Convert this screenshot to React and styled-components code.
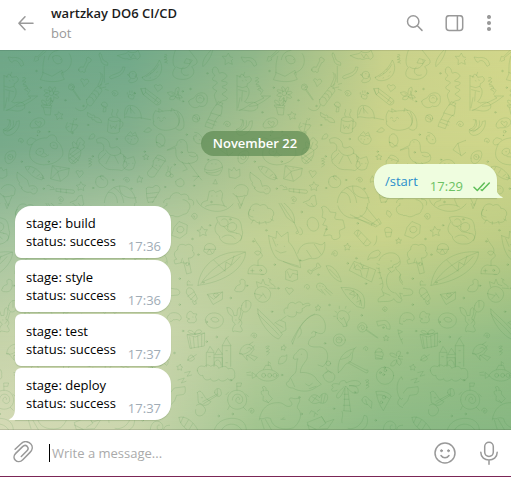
import React from "react";
import styled, { createGlobalStyle } from "styled-components";

const GlobalStyle = createGlobalStyle`
  * { box-sizing: border-box; }
  body { margin: 0; overflow: hidden; font-family: "Open Sans", "Noto Sans", sans-serif; font-size: 13px; }
`;

const Window = styled.div`
  display: flex;
  flex-direction: column;
  width: 511px;
  height: 477px;
  background: #fff;
  border-bottom: 1px solid #7b2556;
`;

const Header = styled.header`
  display: flex;
  align-items: center;
  height: 50px;
  flex: none;
  padding: 0 19px 0 17px;
`;

const Identity = styled.div`
  flex: 1;
  padding: 0 0 5px 16px;
`;

const Title = styled.div`
  font-weight: 600;
  line-height: 20px;
  color: #1c1c1c;
`;

const Subtitle = styled.div`
  line-height: 20px;
  color: #999;
`;

const Icon = styled.svg`
  display: block;
  flex: none;
  width: ${(p) => p.$w || 20}px;
  height: ${(p) => p.$h || 20}px;
  margin-left: ${(p) => p.$left || 0}px;
  fill: none;
  stroke: ${(p) => p.$color || "#999"};
  stroke-width: 1.5;
  stroke-linecap: round;
  stroke-linejoin: round;
`;

const Chat = styled.main`
  position: relative;
  display: flex;
  flex-direction: column;
  height: 380px;
  flex: none;
  padding: 81px 14px 10px 15px;
  overflow: hidden;
`;

const WallpaperBand = styled.div`
  position: absolute;
  inset: 0;
  background: linear-gradient(90deg, ${(p) => p.$colors.join(", ")});
  ${(p) =>
    p.$step > 0 &&
    `mask-image: linear-gradient(180deg, transparent ${(p.$step - 1) * 25}%, #000 ${p.$step * 25}%);`}
`;

const WallpaperEdge = styled.div`
  position: absolute;
  inset: 0;
  box-shadow: inset 0 1px 0 #00000018, inset 0 -1px 0 #00000020;
`;

const Doodles = styled.svg`
  position: absolute;
  inset: 0;
  width: 511px;
  height: 380px;
  fill: none;
  stroke: #3f8545;
  stroke-opacity: 0.17;
  stroke-width: 2.7;
  stroke-linecap: round;
  stroke-linejoin: round;
`;

const DateBadge = styled.div`
  position: relative;
  align-self: center;
  width: 109px;
  height: 25px;
  margin: 0 2px 8px 0;
  border-radius: 13px;
  background: #5f8c54b8;
  color: #fff;
  font-weight: 600;
  line-height: 25px;
  text-align: center;
`;

const Bubble = styled.div`
  position: relative;
  display: flex;
  flex: none;
  align-self: ${(p) => (p.$out ? "flex-end" : "flex-start")};
  width: ${(p) => (p.$out ? 123 : 156)}px;
  height: ${(p) => (p.$out ? 34 : 52)}px;
  margin-bottom: ${(p) => (p.$out ? 8 : 2)}px;
  padding: ${(p) => (p.$out ? "8px 6px 0 11px" : "8px 10px 0 11px")};
  border-radius: ${(p) => p.$corners};
  background: ${(p) => (p.$out ? "#effddf" : "#fff")};
  box-shadow: 0 1px 1px #7b966666;
`;

const Body = styled.div`
  flex: 1;
  white-space: pre-line;
  line-height: 18px;
  color: ${(p) => (p.$link ? "#2a8dcc" : "#000")};
`;

const Time = styled.time`
  align-self: flex-end;
  line-height: 18px;
  padding-bottom: 3px;
  color: ${(p) => (p.$out ? "#6cc264" : "#a0acb6")};
`;

const Tail = styled.svg`
  position: absolute;
  bottom: 0;
  ${(p) => (p.$out ? "right: -6px; transform: scaleX(-1);" : "left: -7px;")}
  width: 8px;
  height: 12px;
  fill: ${(p) => (p.$out ? "#effddf" : "#fff")};
`;

const Ticks = styled(Icon)`
  align-self: flex-end;
  margin-bottom: 5px;
`;

const Composer = styled.footer`
  display: flex;
  align-items: center;
  height: 46px;
  flex: none;
  padding: 0 12px 0 12px;
`;

const Field = styled.div`
  flex: 1;
  display: flex;
  align-items: center;
  height: 18px;
  margin-left: 14px;
  padding-left: 2px;
  border-left: 1px solid #000;
  color: #aaa;
`;

const WALLPAPER = [
  ["#6fa788", "#70a98a", "#8fb78a", "#c8d18c", "#d2d78b"],
  ["#77aa8a", "#84b08d", "#acc490", "#cbd38a", "#cfd68a"],
  ["#a5c49f", "#b9cea6", "#c2d196", "#c9d38b", "#bccc85"],
  ["#c5d3a9", "#cfd8b0", "#b8cd9b", "#a3c48a", "#93bd85"],
  ["#d4dab5", "#cbd6ae", "#a1c48f", "#8cba86", "#87b782"],
];

const Tile = () => (
  <g id="tile">
    <g transform="translate(0 -5) scale(.33333)">
      {/* top row: arrow, dog, bones, worm, watermelon, bear */}
      <path d="M30 48l-6-12 14 2c15-2 30 2 33 22l-8 4-7-12c-8-8-16-6-19-1z" />
      <path d="M102 48l4-14 6 2 20-20M106 49l10-4-2-6 24-20M134 34c-9 34-3 42-6 54l-7 16c26 8 52 8 72-1l-10-19c31-6 38-40 25-58M128 82l28 12 30-18 4 14M158 36c10-12 34 0 27 16-9 9-27 4-27-16M181 44l2-1M145 44c3-19 15-26 29-28" />
      <path d="M236 75c0-10 9-10 14-8l10-20c-4-11 8-13 10-6 8 1 2 12-4 12l-10 20c2 8-5 14-8 6-5 4-12 2-12-4z" />
      <path d="M299 24c9-2 4 20 15 24 9 4 10 4 9 13-17-2-19-9-21-19-2-6-8-13-3-18M375 68c-6 26-24 26-42 34l-5-6c11-11 38-8 40-29zM313 64v48M300 82c10 14-2 26-6 39M306 86c8 17-3 25-4 37" />
      <path d="M427 97c20-9 43-30 51-52 18 28 0 64-37 62-7 0-14-5-14-10zM438 95c17-8 30-20 38-36M451 86l2-2M461 75l2-3M466 94l2-2M450 99l2-1M470 83l2-3" />
      <path d="M526 16c-6 16-12 42 0 51-16 22-6 35 18 36 29 2 48-19 31-38 9-6 20-7 15-21l-22-28M530 66c20 15 47-4 40-20M560 41l17 5-7 10-17-2zM550 66c-14 11-3 31 15 24" />
      <path d="M608 64c-1-18 7-30 24-48M610 64c11-10 23-26 28-48M668 34l11 0 6-10 6 12 12 2-9 9 3 11-12-5-10 6 1-13z" />
      <path d="M353 32c15-7 26-2 31-13 8 6 24 5 30-3 5 12 12 19-2 27-10-9-20 5-30-2-7 2-18-2-29-9zM385 27l8 12 6-12 8 10" />
      <path d="M494 29q7-3 7 3l-9 4q8-2 9 4l-8 4q8-3 9 4l-8 4q7-3 8 3" />
      {/* giraffe on a canvas */}
      <path d="M12 92V196M12 92l12 4M20 97c2-15 12-10 15 0l15-2c10 8 3 17-7 21l-1 10c13 9 4 34-7 44l8 4c30-9 38 10 26 20-20 11-37-4-49 2M14 124l15 4 12-4M17 134l24 6M21 158l-6 30M28 140l-2 28M35 82l-4 10M28 107l2 1M38 105l2 1M64 173l29-14-8-6 28 0-20 15-24 14-20 2M18 196c20-5 30-19 42-22" />
      <path d="M68 98q8-4 9 3-9 4-10 8 8-4 11 2-8 2-9 8 9-2 11 4M72 124q10-2 12 4-10 2-10 6 8 0 9 6M81 130q8 2 9 6l-7 12" />
      {/* potted flower */}
      <circle cx="154" cy="145" r="7" />
      <path d="M150 139c-11-18 4-19 7-2 4-17 18-12 4 5 17-9 24 5 3 7 20 5 12 18-3 6 4 18-11 20-9 2-9 18-22 11-6-4-18 6-18-8-2-9-20-4-13-17 6-5M154 160l-4 20M125 180l31 2-4 7-25-3zM130 188l5 21 16 1 2-20M141 180c-13 0-19-10-15-15 9 1 14 7 15 15M146 176q5-13 13-8-2 8-9 12" />
      <circle cx="214" cy="126" r="9" /><path d="M209 123q5-4 9 0t-5 7M217 134l22 31M220 133l21 31" />
      <path d="M260 164l30-38c5-7 14 3 16 12l-32 44c-8 3-18-8-14-18zM268 156q12 0 12 12M276 146q12 0 12 12M284 137q12 0 12 12M262 180c-5 20-24 22-36 9M295 126l10-10M299 130l18-4M316 118l10-3M316 133l9 3" />
      <path d="M245 110c-9-6 2-14 8-4 8-9 18 2 10 8l-10 10zM465 128c-7-6 3-14 9-5 8-9 18 3 10 9l-10 7zM230 384c-6-7 4-11 9-4 9-7 14 3 8 9l-8 8z" />
      <path d="M423 131l13-1 46 35c2 11-5 17-14 14l-38-30zM423 131l7 18 7-7-1-12M437 142l37 29M472 157l-9 14M480 169l-9 8" />
      <circle cx="398" cy="90" r="11" /><path d="M391 102c-14 11 5 14 14 8 12-4 7-19 0-16M388 87l-6 2 7 5M398 86h1M335 142c7-13 25-1 17 8-10 8-20-4-11-7 6 0 6 5 3 6" />
      <path d="M385 155c-2-9 6-9 9-4 8-4 10 2 7 8 2 5-16 4-16-4M382 143v4M389 138v4M396 138v4M403 142v4" />
      <path d="M503 143c14-7 19 1 22 6-1-16 5-23 11-22 4 10-2 19-7 24 9-3 16 1 18 7-8 3-15 1-22-5 3 8-5 14-16 10 0-7 4-11 12-10-8 2-15-1-18-10M532 138l8 28M516 145l18 18" />
      <path d="M566 169c2-9 17-5 21-17 7-12 38-14 35 11 1 18-12 25-24 20-11 12-32 1-32-14" /><circle cx="600" cy="162" r="12" /><path d="M596 160q3-6 8-1" />
      <path d="M637 73c5-13 17-7 19 7 3 11 5-3 18 5 17 10-3 17-9 22-5 5 23-1 15 11-4 6-18 3-12 10 6 3 17 4 10 11l-11 7c-3 6 15 7 15 15-4 9-16 0-26 16M638 74c-5 14 8 12 6 19-7 6-11 13 2 15 12 5 2 10-6 16-7 8 8 11 11 14-16 15-3 20-2 34" />
      <path d="M651 177l16 7-3 24c-17 8-20 25-27 43l-22-7c4-19 15-26 19-43zM649 181l5-11 15 5-5 9M633 204l30 9M625 223l25 8M622 232l24 9" />
      {/* middle band */}
      <path d="M165 209l8-1 3-8 6 7 7 0-5 7 3 8-9-3-7 5-1-9zM263 203l14 8c6-3 9 3 6 6 12-2 22 7 22 16-11-1-18 0-22-9-8 2-9-2-6-6-13-1-17-6-14-15M304 178c3-12 19-7 18 3-1 8-13 11-18-3M311 190l-2 11 8-1 1-11M307 182l10 4" />
      <path d="M202 233l-5 13c8 23 25 18 37-5l-6-3M221 226l-8 34M210 236l19 4M222 221c3 6 11 4 8-1M200 247l7-3" />
      <path d="M325 222c-2-7 31-10 36 2l-3 37c-10 7-30 5-35-1zM326 224c8 8 27 8 34 0M358 229c16-5 14 19-1 23M331 240l3 11 6-8 6 8 4-12M338 214c-10-10 5-12-1-21M352 214c-8-11 7-12 1-21" />
      <path d="M374 218c-2-22 3-37 16-37 19 0 35 15 34 39M374 218c7-8 19 4 45 0l33 6M391 184l2 20M385 190l-7 18M390 189l14 16" />
      <path d="M461 230c-5-19 1-24 5-33l13 4c12-5 26-3 35-5 25-5 38 19 38 42 0 20-16 22-26 11-22 11-47 8-58-4-8-5-10-10-7-15M477 201l-1-10 13 8M513 200l2-10 9 7M472 219q5-5 8 1M489 219q5-5 8 1M479 227q5 6 10-1M524 202c15 15 18 34 4 46M532 201q13 21 3 40" />
      <circle cx="588" cy="220" r="11" /><path d="M580 216l13 8M583 211q12 4 11 17M671 238c2-15 21-10 20 1-2 9-16 7-14-1 2-4 8 0 6 2" />
      <path d="M22 224l8 1c-4 16-4 23-18 27-6 12 37 3 37-22l9-3c3 24-18 46-36 44-12-2-14-12-11-18M30 225q10 21-16 33M40 227q6 24-19 34" />
      <path d="M91 237c6-21 45-27 43-3-4 14-21 15-32 14-8 4-14-2-11-11M108 237c-9-9 3-12 6-4 8-8 15 0 4 12-3-1-7-4-10-8" /><circle cx="116" cy="260" r="4" /><circle cx="112" cy="271" r="1" />
      <path d="M97 297c6-9 23-20 44-18 11-17 31-9 29 8 13 8 24 37 16 47-18 28-66 33-86 15-19-14-10-38-3-52-18 11-22-13-4-19l14 5" /><path d="M109 326c-7-11 13-22 21-13 5 14-12 26-21 13M151 296c13-14 27 5 19 15-11 2-22-4-19-15M132 323l8 6M123 335q10 5 23-5M119 320h3M160 301h3" />
      <path d="M211 312c12-9 23-3 31 4 3 15-8 35-22 40-19 0-16-31-9-44M210 327l26 20M208 338l18 15M238 320l-30 20M229 313l-19 15M238 333l-22 20M221 309c-10-23 1-22 8-11 3-21 15-25 18-13 9 2 7 12 1 14 10 2 6 13-6 17M231 299l1 12M240 292l-6 17" />
      <path d="M290 283c17-14 39 2 39 18 0 10 11 9 21 4 10 4 15 12 10 20 14 2 22 18 11 25l8 0 3 12-16 15c-22-7-43 4-58-15-10-6-12-12-11-20-6-9 4-23 13-25 6-21-7-26-17-23zM317 315c13 23 37 19 46 8M317 325l-19 20M330 333l-12 23M344 333l11 22M373 346l-3-14 12 9 19-6 5 17-6 19c-12 8-29 4-31-9zM386 356h1M398 355h1" />
      <path d="M376 283c-3-12 10-14 19-9 9-8 23 3 19 13-5 16-24 13-32 4zM382 269l10-9 5 8 9-6 5 12M384 282h1M394 284h1M404 281h1M391 291h1" />
      <path d="M470 293c-6-19 5-29 14-26 11 6 15 23 6 34-9 10-21 6-20-8zM468 291l11 4 4 6 10 2M432 260c10-14 17-16 22-4q-8 10-22 4M267 282c3-18 17-19 18-9q-3 11-18 9" />
      <path d="M502 315l28-14c0-18 20-24 29-9 6 12 0 22 6 31 24-6 33 11 26 24-18 13-49 12-59-7-8-13-2-21-6-32l-17 6zM542 291h1M546 350l16 23-13 5M566 353l30 41M596 394l-17 0M596 394l-14 13M596 394l9 11M568 331q15 10 23 0" />
      <path d="M584 262c17-1 31 24 21 33-12 5-24-5-25-15M588 270h2M598 284h2M583 283c-6-10 1-14 6-9M675 295l23-9 15 24-27 22-25-17zM675 295l8 36" />
      <path d="M15 340c-2-17 15-25 29-22 10 12-3 34-17 38-9 0-12-6-12-16" /><circle cx="31" cy="336" r="8" /><path d="M28 333q5-1 4 4" />
      <path d="M265 341q9-4 10 2l-9 5q8-2 9 4l-9 5q8-3 9 3l-9 6M429 334l6-1 2-6 4 6 6 1-5 4 2 6-6-3-6 3 1-6zM56 290c-4-14 13-12 14-3 0 8-9 8-9 2 1-3 4-2 4 0" />
      <path d="M460 348l13-18c11 1 21 7 24 15l-34 50c-14 6-25-6-19-16 7-7 17-11 16-31M466 338l31 11M456 363l16 12M475 346h2M468 361h2M478 363h2" />
      <path d="M614 372c2-22 24-34 41-26 18 10 14 32 1 44-16 4-35-2-40-9zM614 372c8 8 33 5 54-6M619 382c15 4 30 1 43-7M635 356h1M647 357h1" />
      <path d="M76 366c12-9 41 6 54 29l-4 10-14-4c-17-7-32-23-36-35M89 366l-4 8M104 374l-6 10M119 388l-8 6M121 397l12 4M126 390l5 11M158 362l50 8-4 22-22 17-29-7zM158 363l16 16 33-8M154 400l20-20M181 407l-8-26M180 370h1" />
      <path d="M687 372l9 5 7-10 7 10 10-5 1 21-13 7-19-3zM-13 372l9 5 7-10 7 10 10-5 1 21-13 7-19-3z" />
      <path d="M287 411c0-14 7-18 19-17 20 4 22 25 9 32-16 6-29-3-28-15M300 394q2-6 11-1M301 394q0 9 9 11M370 404c3-13 21-6 18 3-3 7-14 4-12-3 4-5 7 1 5 3M414 400l4-8 3 7 8 0-5 6 1 7-6-3-7 3 0-7z" />
      <path d="M500 383c5-9 15-2 10 9-9 7-17-1-10-9M513 387c9-2 9 11 1 10-6-2-6-8-1-10M503 377q5-10 1-14M510 382q-1-12 5-17M527 409c3-7 8-4 14-9 8 2 14 12 10 20-9 10-26 5-24-11M641 414l5-11 6 14-13-1" />
      <path d="M52 382l30 23 6 19c10-5 23-1 24 11-1 12-15 16-20 6-14 4-24-5-29-12l4-1c-10-5-12-14-8-15-9-9-10-22-7-31M96 433h1M102 430h1M169 431l50 4c8 3 4 11-2 10l-48-6zM182 432v9M199 435v9M141 422c12-7 8 11 18 3l4 8-13 1M243 411l5 8 9 2-7 7 1 9-8-5-9 4 1-9-6-6 9-2z" />
      <path d="M4 431c10-19 38-15 42 3-3 9-1 17-7 19-5-6-9 4-15 1-10 4-20-2-24-9M10 452l14 30 12-28M703 431c10-19 38-15 42 3-3 9-1 17-7 19-5-6-9 4-15 1-10 4-20-2-24-9M709 452l14 30 12-28" />
      <path d="M313 480c-2-29 19-56 47-57 30-2 50 27 49 60M342 428c26 14 28 35 30 54M326 442c23-2 27 21 27 42M359 423c-4 30 28 40 49 35M439 430c7-10 19 5 25-8 11-4 21 9 13 19l-27 43c-11-20-10-29-11-54M440 446l34-4M442 459l27-3M446 472l15-2" />
      <path d="M491 480c-4-15 9-21 18-18 4-22 28-23 34-12 16-8 26 4 23 13 12-2 18 8 14 17M604 480c-1-7 8-12 18-13l6-28 12-3 7 6 15-6 6 10-3 19 8 18M635 453h1M650 453h1M175 460c5-12 19-1 14 8-8 6-15-3-9-6 4-1 5 3 2 4M214 480l-3-8 18-7 6-11 11-4 5 28" />
      {[[109,78],[122,128],[88,202],[196,166],[250,183],[264,240],[404,145],[548,139],[571,132],[549,169],[622,85],[147,260],[217,264],[350,282],[434,320],[560,269],[545,322],[65,350],[146,350],[278,334],[524,359],[624,344],[279,429],[339,405],[495,426],[582,422],[131,431],[394,431]].map(([x, y]) => <circle key={x + "-" + y} cx={x} cy={y} r="2.3" />)}
    </g>
    <g transform="translate(170 150) scale(.33333)">
      {/* upper band: sheep, parasol, tree, balloon */}
      <path d="M240 28c0-15 22-22 30-11 13-8 22 0 23 8 17-1 23 18 14 25 4 14-12 21-21 15-14 9-29 2-32-4-17 2-24-16-14-33M240 28c-10 13-4 21 9 23M250 31h1M250 60l-6 10M268 65v8M286 66l3 6M302 57l8 5" />
      <path d="M326 8l24 44 23 17c4-25-12-45-36-64zM331 7l41 60M373 69l13 29c-11 9-9-6-4-5M389 81c15 13 8 27 0 23" />
      <path d="M455 22c5-9 20 0 25 14l18 2c-1 11-7 14-1 20l22 2 6 24-16 7c-4 8 4 13 0 22-13 9-25 8-24-6-6-6-17 2-24 0 4-14 12-22 10-29l-13-3 10-18-12-5c3-15 4-16-1-30" />
      <path d="M504 18c8 23 27 39 51 36 25-1 39-20 39-54M554 54l60 20M570 46l50 30M589 22l41 50M541 44l64 32M604 74l13 7 17-11-7-13zM652 32l8 3 5 9-6 8-9-9z" />
      <path d="M684 40c-10-11-4-22 6-24-3-19 16-26 28-18 12-10 34-2 34 12 12 1 17 24-4 30-13-4-18 12-31 13-13-1-14-10-22-9zM784 18c23-27 72-28 84-6M800 20c8-9 50-11 59 1M406 8c-2-9 26-14 34 3-1 12-24 13-34-3M421 5l9 13M361 2c-2 10 15 12 20 0M80 0c7 29 77 54 109 12M106 20c7-9 53-9 64 1M201 0l9 26 12-26M-4 48c21-7 15 9 37-1 10-7 20-3 22-16 12-12 0-31-16-32" />
      <path d="M12 83l-7 23 25 9 20-15 2-25-24-10zM22 94c-8-14 14-20 19-9 4 11-14 19-19 9M711 83l-7 23 25 9 20-15 2-25-24-10zM721 94c-8-14 14-20 19-9 4 11-14 19-19 9" />
      <path d="M82 91l9-1 4-11 7 10 10 0-6 9 3 9-10-4-10 6 1-11zM781 91l9-1 4-11 7 10 10 0-6 9 3 9-10-4-10 6 1-11zM64 50c3-17 21-10 17 2-4 10-16 5-12-3 3-5 7 1 4 4" />
      <path d="M140 52c13-6 46-3 66 7 12 15 6 25 12 37 0 21-14 38-34 36-20 2-36-10-36-24-18-13-15-28-5-42zM155 60c9-10 22 2 19 12-6 13-29 7-27-5M173 80c0-12 18-17 25-7 8 15-10 26-20 19-6-2-5-8-5-12M161 79l15 16 23 4M199 100c17 0 20 14 12 23M156 112c13-11 30-9 40 5" />
      <path d="M412 75c-4-15 9-27 20-22 14 6 20 29 7 38-13 8-25-5-27-16M553 99c2-6 7-9 13-9l36 37c-3 9-10 12-16 10zM565 91l-4 16M572 99l-8 11M591 117l-10 14M620 108q2 20-8 28M644 89c0-10 16-9 22 1l-4 20-12 1zM647 97h17M523 137l6-1 4-7 2 8 7 2-5 5 1 6-7-3-6 4 1-8zM678 120l6-1 2-6 2 6 7 1-5 4 1 6-5-3-6 4 1-7z" />
      {/* fox, surf board, broccoli, gamepad */}
      <path d="M296 107l22 8 2-22 14 17 20-14 2 30c19 18 23 43 33 57l3 20c-23-3-48-19-67-24-15-10-27-41-29-72M308 115l10 24M322 134h1M343 139h1M317 151l15 8 16-4M383 160c8-31 28-31 48-31 17 0 22 14 33-3 5 30-14 53-38 50-12-3-28 11-36 6M410 151l14 21M433 133l20 30M340 185l45 13" />
      <path d="M84 256c7-67 70-107 142-100 4 24-31 86-142 100M92 252c23-40 69-72 134-96M103 243c39-15 78-39 107-73M132 181l33 33 3-28 15 9 9-27M784 256c7-67 70-107 142-100 4 24-31 86-142 100M792 252c23-40 69-72 134-96M803 243c39-15 78-39 107-73M832 181l33 33 3-28 15 9 9-27" />
      <path d="M19 177c-13-16-2-25 4-28-1-20 18-17 24-13 13-9 27 4 20 17 11 7 4 23-12 21l9 44-14 4-10-39M20 177l-8 4 3 11 20-4 15 2M37 175l-4 13" /><circle cx="52" cy="192" r="5" />
      <path d="M718 177c-13-16-2-25 4-28-1-20 18-17 24-13 13-9 27 4 20 17 11 7 4 23-12 21l9 44-14 4-10-39M719 177l-8 4 3 11 20-4 15 2M736 175l-4 13" />
      <path d="M103 147c-2-22 31-21 34-3 1 8-8 6-5 13-8 8-20 9-25 0-9-2-6-5-4-10M104 148l33 0M112 157l6-10 8 13" />
      <path d="M234 221c-2-18 14-30 25-25 5 1 18-2 22 3 13 8 13 28-8 25M235 221l45 2M264 197v-16l13-12c0-13-15-21-23-12 4 12 17 11 19-4 0-14-14-21-20-38M247 207v10M242 212h10" /><circle cx="272" cy="211" r="3" />
      <path d="M347 237v-24l10-7 10 4 15 2 1 26-15 6zM352 215l8 19 8-14 15 4M413 215c-2-8 9-6 10-2l17-13c-3-14 8-14 7-5 8 1 6 10-1 8l-20 11c1 10-8 11-9 3zM469 198c17-8 39 22 45 48-19-5-37-25-45-48M479 208l25 25M485 164c2-17 19-15 17-2-2 10-15 6-12-2 2-4 6-1 5 2" />
      <path d="M538 210l14-26 65 26-12 35zM552 190l4 18 15 2 5 18M571 188l9 18 16-1-7 27M550 205l12-11 14 14 4-12M593 179c2-16 12-25 32-29l6 7c-2 14-15 18-28 17zM440 263c-5-24 29-13 29 3M442 267l16 12M453 268l13 17M464 268l18 18M470 266q10 8 17 14M449 258h1M458 260h1M403 262c1-14 18-9 15 1-3 8-11 3-8-2M347 269c-4-6 6-10 10-2 8-7 17 3 10 8l-9 8z" />
      {/* dinosaur */}
      <path d="M627 182c10-29 56-32 62-5 5 16-2 23-13 25 2 12 14 11 16 23-8 12 13 23 12 36 11 8 20 6 24 12-7 12-26 12-39 6l7 21c-3 12-20 8-24-4-12 13-26 6-47 10-4-12 8-16 17-20l-7-18c13-19-10-42-8-65M662 183h3M668 201l-15 5 12 11 9-7M668 202c-3-13 14-5 20-17M662 215c-18 8-19 56 10 63M692 224c-10 10-1 26 10 32M676 278l16 18M641 278l19 8M621 191l7 3M619 204l8 2M624 218l8 0M628 235l7-1M630 253l7-3" />
      <path d="M197 264c1-12 17-7 14-14-7-18 18-14 14-1 3 17-5 29-22 26-8 1-13-6-6-11M113 283l45-7-1 22-27 15zM113 284l18 14 26-22M132 288c-5-9 4-9 6-5 8-7 10 4 1 9zM49 278c-1-18 13-18 21-8 3 8 10 17 12 27l-8 8-13-9zM53 289l19-13M62 299l14-15M67 304l5 10 7-3-2-9M52 255c-3-14 5-16 8-9M52 255h16M748 278c-1-18 13-18 21-8 3 8 10 17 12 27l-8 8-13-9zM752 289l19-13M761 299l14-15M812 283l45-7-1 22-27 15z" />
      <path d="M254 281c1-30 44-27 48 0-2 36-47 33-48 0M254 281l20 5M278 279l10 15M266 297l13-14M263 261l-4-16 15 6 5-14 6 16 12 4M300 239c-7 16 17 12 15 23M295 235l8 5M298 264l20 2" />
      <path d="M514 263c19-2 46 2 61 17 10 10 10 31 7 45l-21-5c-15-12-38-36-47-57zM525 269c23-2 47 11 50 48M539 281l12-9 2 13zM548 294l15-12-1 16M560 306l12-5-3 12" />
      {/* lower middle: boat, whale spout, rabbits */}
      <path d="M-8 270c7-10 16-3 24-3 12-1 19 12 8 18l-29 3M2 340c6-3 18-4 27 4 8 9 4 16-1 18-8-7-13-1-18-3-5 10-18 4-10-3l-10-5" />
      <path d="M50 352c-1-19 15-23 19-11l12 1-5 9c8 10-1 19-9 17-17 4-19-11-9-11zM68 351h1M747 352c-1-19 15-23 19-11l12 1-5 9c8 10-1 19-9 17-17 4-19-11-9-11zM106 360c3-29 47-27 54-3 4 33-51 39-54 3M123 357c5-11 23-3 24 5-8 8-23 4-24-5M806 360c3-29 47-27 54-3 4 33-51 39-54 3M823 357c5-11 23-3 24 5-8 8-23 4-24-5" />
      <path d="M171 323c12-3 19 10 21 24l9-1c0-20 5-26 10-22 4 15-1 23-5 31 13 10 11 19 4 23 12 14 7 20-5 17l-11-2-5 3c-5-13 6-21 7-24-15-10-6-20-10-24-12-5-14-16-15-25M197 360h1M207 359h1M215 317c6-20 20-18 27-10 4 10-3 25-14 29-14 0-15-9-13-19M228 302v20M219 337c-6 14-2 19-14 33M871 323c12-3 19 10 21 24l9-1c0-20 5-26 10-22 4 15-1 23-5 31 13 10 11 19 4 23 12 14 7 20-5 17l-11-2-5 3c-5-13 6-21 7-24-15-10-6-20-10-24-12-5-14-16-15-25M915 317c6-20 20-18 27-10 4 10-3 25-14 29-14 0-15-9-13-19" />
      <path d="M263 327c17 18 58 52 74 76l-11 14c-21-5-63-52-63-90M263 341c22 24 46 43 64 65M314 369l15-9 17 7 2 23-15 8M318 370l21 12M333 360l15-11M344 340c-7-13 4-19 9-15-1-22 20-20 23-13 12-13 22-3 22 3 15-9 25-5 21 2-19-1-13 8-23 9 5 14-11 16-17 9 4 20-19 18-26 12M963 327c17 18 58 52 74 76l-11 14c-21-5-63-52-63-90" />
      <path d="M368 432c10-32 32-80 66-88 19-4 35 20 32 41-2 20-15 18-30 11 2 10-1 17-11 15-17 20-12 31 16 30 24-4 40 18 28 46l-10 13-15-5M368 432l-3-8c20-41 42-74 69-82M391 383q10 18-7 30M425 400q2-12 15-2" /><circle cx="475" cy="490" r="7" />
      <circle cx="508" cy="420" r="18" /><circle cx="507" cy="420" r="9" /><path d="M503 418q3-5 8 1" />
      <path d="M502 355c-4-19 9-26 21-22 20 8 17 28 8 34l-1 12-11 1c2-11-13-11-17-25M510 354q6 9 11-2l10 25M491 349h5M495 334l5 3M508 319v7M528 319l-2 6M541 334l-5 4" />
      <circle cx="577" cy="382" r="14" /><path d="M567 383c4-13 18-8 16 1-3 10-12 3-8-3M588 391l34 23M590 389l34 24M621 364l16-2c13-5 26 10 23 26l-10-2c0-14-9-13-15-11l-10 3zM637 329c2-13 16-10 14 0-4 10-14 4-9-1 4-3 5 1 3 3M684 390c17 0 37 28 47 59l-9 8c-19-11-36-45-38-67M694 419l25-17M709 446l17-14M686 401l9-4M689 370c-2-20 6-34 30-34 11 5 17 15 11 27l-16-3c-4 15-23 15-25 10M701 340l11 22" />
      <path d="M437 321l5-1 2-6 4 6 5 2-5 4 1 5-6-2-5 3 1-6zM334 441l5-1 3-6 2 6 5 2-5 4 0 5-5-3-5 2 1-6zM641 412l5-1 2-6 3 6 6 1-4 4 1 6-6-3-5 3 0-6zM21 499l6-1 4-6 2 7 5 2-4 4 1 6-6-3-6 2 1-6zM721 499l6-1 4-6 2 7 5 2-4 4 1 6-6-3-6 2 1-6z" />
      {[0, 699].map((x) => <path key={x} transform={`translate(${x} 0)`} d="M52 404l52-5-1 39-42 7zM52 404l24 7 28-12M59 411l5 34M70 411l3 32M83 408l2 34M95 404l0 35M75 403c-15-1-26-8-18-12 10 0 15 5 18 12 0-18 20-15 20-8-6 7-13 8-20 8M82 513c-2-13 10-18 22-13 4-9 16-4 18-1 12-8 22-2 24 6 14-9 26-7 28 2 15-7 22 7 20 17 4 14-13 21-21 12-12 11-23 8-27 1-10 10-23 7-24-1-11 9-24 1-23-10-10 3-14-4-17-15M109 500v-43h23v42M112 455l8-16 11 15M132 473h25v28M135 463l10-18 12 17zM157 498v-61h25v62M157 436l12-22 14 23M116 470h5M168 452h4M168 488h4M133 493c-1-18 20-18 20 2M168 414l7-4M54 480c-1-14 13-20 16-9 11 6-10 19-16 9M52 481l27-17M209 461c1-15 10-26 24-28 11 0 17 7 19 15l-12 16-11 3 3 14-17-20zM209 461c15 8 34-9 44-24M238 433l11-7M243 465l19 7-9 10-21-16M231 445q10-7 14 3M243 408c-1-13 19-11 17 0-4 11-15 3-10-3 4-2 6 1 4 4M287 441q8-6 11-2l-9 7q8-2 10 3l-10 6q8-2 9 4l-7 6M326 484c2-13 9-18 19-15l6-5-1 12c-3 11-12 17-23 16zM258 526c11-22 51-25 69-1-10 23-52 25-69 1l-12-9 1 18 13-7M280 509l7-13 14 0 5 13M295 496v-11l7 5M230 518l12-2M231 525l12 1" />)}
      <circle cx="281" cy="526" r="6" /><circle cx="299" cy="526" r="6" /><circle cx="315" cy="526" r="6" />
      {/* loch monster, parasol, bowling ball, cake */}
      <path d="M370 474c0-13 12-14 15-23 11-11 30 0 27 18 3 12-22 27-21 49 21-3 44 7 49 21l14 14-19 11c-17 14-51 11-66 0-18 1-27-16-13-20 4-9 7-15 16-21 12-10 4-32 12-47-8 3-13 3-14-2M394 463h1M407 552l10 6 10-8M363 536l11 24M418 566l20-7M459 527c5-18 30-14 35-1 5 21-26 33-35 1M467 520l8-9 9 8M472 511l-4-8" />
      <path d="M505 518c-5-36 12-65 48-72-11 14 1 36-18 43-12 1-17 22-30 29M513 478c12-3 27-5 31-20M553 446l5-4M535 489l52 29c8 4 10-9 4-9M537 484l54 28" />
      <circle cx="645" cy="527" r="26" /><circle cx="646" cy="511" r="4" /><circle cx="631" cy="518" r="3" /><circle cx="641" cy="524" r="3" />
      <path d="M616 456h22l2 8-4 13h-18zM617 457c-3-8 5-7 8-12 10 0 15 7 8 11M619 465l18 5M620 473l17 4M580 447c2-12 15-8 13 1-5 8-9 2-7-2M678 472c-10 0-22-6-17-13 12-1 16 7 19 9-3-13 7-18 12-12-1 11-6 13-8 15 13-6 20 1 20 5-10 4-16-1-20-2 14 9 10 16 5 22-9-4-8-12-9-17-1 14-7 22-18 18 0-9 7-15 14-17" />
      <path d="M694 531c-20 15-14 60 0 67l12-9c-5 13 7 24 10 34 16-5 20-20 31-38l-4-24-24 13c-10-2-8-19-25-43M706 590l38-26M690 594c-14 17-5 23 9 29l17-7M725 541l17-6-8 14 14-4M744 520l15-4-8 15 13-4M739 529l-12 6M-5 586l18-22 32-4c2 10 2 23-8 24l-17 2-6 16-18 20M24 540l19-6-9 15 14-5M44 518l17-4-10 15 14-4" />
      {/* bottom row */}
      {[0, 699].map((x) => <path key={x} transform={`translate(${x} 0)`} d="M82 578c12-16 17 10 29 20l12 7c-8 12-25 14-28 7l-9-3c-4-12 0-22-4-31M79 616c14-12 27 8 28 14-5 25-36 23-30-1M94 593h4M98 605l44-23M101 611l43-26M134 578c-2-15 19-17 19-4 6 13-10 25-19 4M142 568v15M173 600c-3-35 51-42 57-3 3 38-55 43-57 3M187 600c1-26 33-21 31 1-3 16-24 9-20-3 3-12 15-5 10 1M201 571l-1-22 15 0-3 10-11 0M176 576l-8 8M228 583l7 6M178 619l-5 10M220 622l9 9M236 632c2-13 17-7 16 1-4 13-14 4-10-1 3-5 6 1 3 3M27 652c19-6 43 12 56 37M27 652c2 21 18 32 24 37M40 651l-8 17M55 660l-12 20M68 671l-10 17M133 690c7-25 28-33 50-35 28-1 46 12 46 35M155 690c8-19 43-28 60 0M279 587c-11-9-4-18 3-14l-5-12c8-6 14 5 10 11 10-4 9 6 8 10l12 14-12 12-15-6zM268 660c4-34 26-52 54-52 19-2 23 14 37 11 12-3 6-12-1-20 0-10 13-2 17-3l13-1c5 10-7 18-6 29 20 18 5 46-11 59-15 6-62 9-69-27-15-8-21 5-33-1M274 660l8 26M286 658l18 31M338 655l4-2M333 658h12M296 609l-8-9" />)}
      <path d="M417 600c4-21 25-19 32-6 2-14 21-20 24-6 1 19-12 27-26 19-9 5-24 6-30-7M426 590l21 13M441 588l-14 18M456 584l-3 24M466 583l-6 25M501 571c-16 7-21-1-11-9-10-7 0-15 18-9-1-12 22-16 20-4 20-11 43-9 44 3-8 10-25 5-35 5 24-3 30 9 27 22-17 5-27-9-37-21-8 17-14 39-26 36-6-9 7-20 21-34M525 565l-3 66M533 565l9 70M522 583h11M522 598h14M520 616h19M520 632l23 2" />
      <path d="M586 541q9-5 11 1l-9 5q8-3 9 4l-9 5q9-2 9 4l-9 6M576 600c3-15 15-13 20-2l10 7-2 20-10-11c-10-1-17-5-18-14M587 599l4 14M618 575c15-4 34 0 46 13l-24 44c-13-19-18-35-22-57M622 585c13-2 25 2 35 11" /><circle cx="642" cy="592" r="5" /><circle cx="634" cy="607" r="4" />
      <path d="M413 667l42-17 11 17 26-9-19 28-54 3zM455 650l12 20-18 12M432 650l3-11 8 5M419 640l4-8 12 5M442 634l8-6M412 675l26 13M516 668c-3-14 6-22 0-34M534 685c18 6 44-10 48-39l8 2c8 20-3 39-15 42M640 690c0-20 15-31 27-25 13 7 14 21 4 25-12 5-15-17-4-15M680 690c0-13 15-19 28-10" />
      {[[124,6],[181,58],[120,76],[289,91],[395,36],[469,88],[563,70],[67,117],[250,124],[85,164],[314,194],[390,181],[559,175],[533,190],[445,224],[29,236],[100,247],[588,251],[325,265],[182,294],[231,257],[478,315],[29,314],[306,335],[640,383],[39,393],[110,366],[140,411],[465,430],[575,346],[644,503],[13,459],[110,425],[336,525],[183,541],[388,592],[492,626],[617,661],[146,648],[188,642],[395,642],[555,577]].map(([x, y]) => <circle key={x + "-" + y} cx={x} cy={y} r="2.5" />)}
    </g>
  </g>
);

const MESSAGES = [
  { text: "stage: build\nstatus: success", time: "17:36" },
  { text: "stage: style\nstatus: success", time: "17:36" },
  { text: "stage: test\nstatus: success", time: "17:37" },
  { text: "stage: deploy\nstatus: success", time: "17:37" },
];

export default function App() {
  return (
    <Window>
      <GlobalStyle />
      <Header>
        <Icon $w={18} $h={20} viewBox="0 0 18 20"><path d="M2 8.2h14M8 1.7L1.9 8.2 8 14.7" /></Icon>
        <Identity>
          <Title>wartzkay DO6 CI/CD</Title>
          <Subtitle>bot</Subtitle>
        </Identity>
        <Icon $w={18} $h={20} viewBox="0 0 18 20"><circle cx="7.2" cy="6.5" r="5.7" /><path d="M11.4 10.8l4.6 4.6" /></Icon>
        <Icon $w={19} $h={20} $left={21} viewBox="0 0 19 20"><rect x="1.2" y=".7" width="16.5" height="14.7" rx="3" /><path d="M12.4 1v14" /></Icon>
        <Icon $w={6} $h={20} $left={22} viewBox="0 0 6 20">
          {[2, 8, 14].map((y) => <circle key={y} cx="3" cy={y} r="1.3" fill="#999" />)}
        </Icon>
      </Header>
      <Chat>
        {WALLPAPER.map((colors, i) => <WallpaperBand key={i} $step={i} $colors={colors} />)}
        <WallpaperEdge />
        <Doodles viewBox="0 0 511 380">
          <defs>
            <clipPath id="upper"><rect x="0" y="0" width="233" height="153" /></clipPath>
            <clipPath id="lower"><rect x="170" y="153" width="233" height="227" /></clipPath>
          </defs>
          <symbol id="doodle" viewBox="0 0 933 380" width="933" height="380"><Tile /></symbol>
          {[0, 233, 466].map((x) => (
            <g key={"u" + x} transform={`translate(${x} 0)`}><g clipPath="url(#upper)"><use href="#doodle" /></g></g>
          ))}
          {[-233, 0, 233].map((x) => (
            <g key={"l" + x} transform={`translate(${x} 0)`}><g clipPath="url(#lower)"><use href="#doodle" /></g></g>
          ))}
        </Doodles>
        <DateBadge>November 22</DateBadge>
        <Bubble $out $corners="16px 16px 0 16px">
          <Body $link>/start</Body>
          <Time $out>17:29</Time>
          <Ticks $w={18} $h={12} $left={10} $color="#5fbe58" viewBox="0 0 18 12"><path d="M1 6.2l3.3 3.3 7-7.5M8.2 8.8l.9.7 7.2-7.5" /></Ticks>
          <Tail $out viewBox="0 0 8 12"><path d="M8 0v12H.5Q0 11.5.7 11C5 9 7 5 7 0z" /></Tail>
        </Bubble>
        {MESSAGES.map((m, i) => {
          const last = i === MESSAGES.length - 1;
          return (
            <Bubble key={m.text} $corners={`${i === 0 ? 16 : 6}px 16px 16px ${last ? 0 : 6}px`}>
              <Body>{m.text}</Body>
              <Time>{m.time}</Time>
              {last && <Tail viewBox="0 0 8 12"><path d="M8 0v12H1.5Q1 11.5 1.7 11C6 9 7 5 7 0z" /></Tail>}
            </Bubble>
          );
        })}
      </Chat>
      <Composer>
        <Icon $w={23} $h={24} viewBox="0 0 23 24">
          <path d="M3.1 8.2L9 2.7c3.5-3.5 8-2.1 10 .4 2 2.6 1.4 6-1 8.3l-7.2 7.3c-2.4 2.4-5.6 2.4-7.4.6-1.9-1.9-1.8-4.8.3-6.9l6.9-6.8c1.5-1.5 3.4-1.4 4.6-.2 1.2 1.3 1.1 3-.2 4.3l-5.7 5.8" />
        </Icon>
        <Field>Write a message...</Field>
        <Icon $w={24} $h={24} viewBox="0 0 24 24"><circle cx="11" cy="12" r="10" /><path d="M7 14.5c2 3 6 3 8 0" /><g fill="#999" strokeWidth="1"><circle cx="7.5" cy="9.7" r="1" /><circle cx="14.5" cy="9.7" r="1" /></g></Icon>
        <Icon $w={20} $h={24} $left={21} viewBox="0 0 20 24"><rect x="5.7" y="1.2" width="8.6" height="14.2" rx="4.3" /><path d="M1.8 11.3c0 10.4 16.4 10.4 16.4 0M10 19.2v4" /></Icon>
      </Composer>
    </Window>
  );
}
